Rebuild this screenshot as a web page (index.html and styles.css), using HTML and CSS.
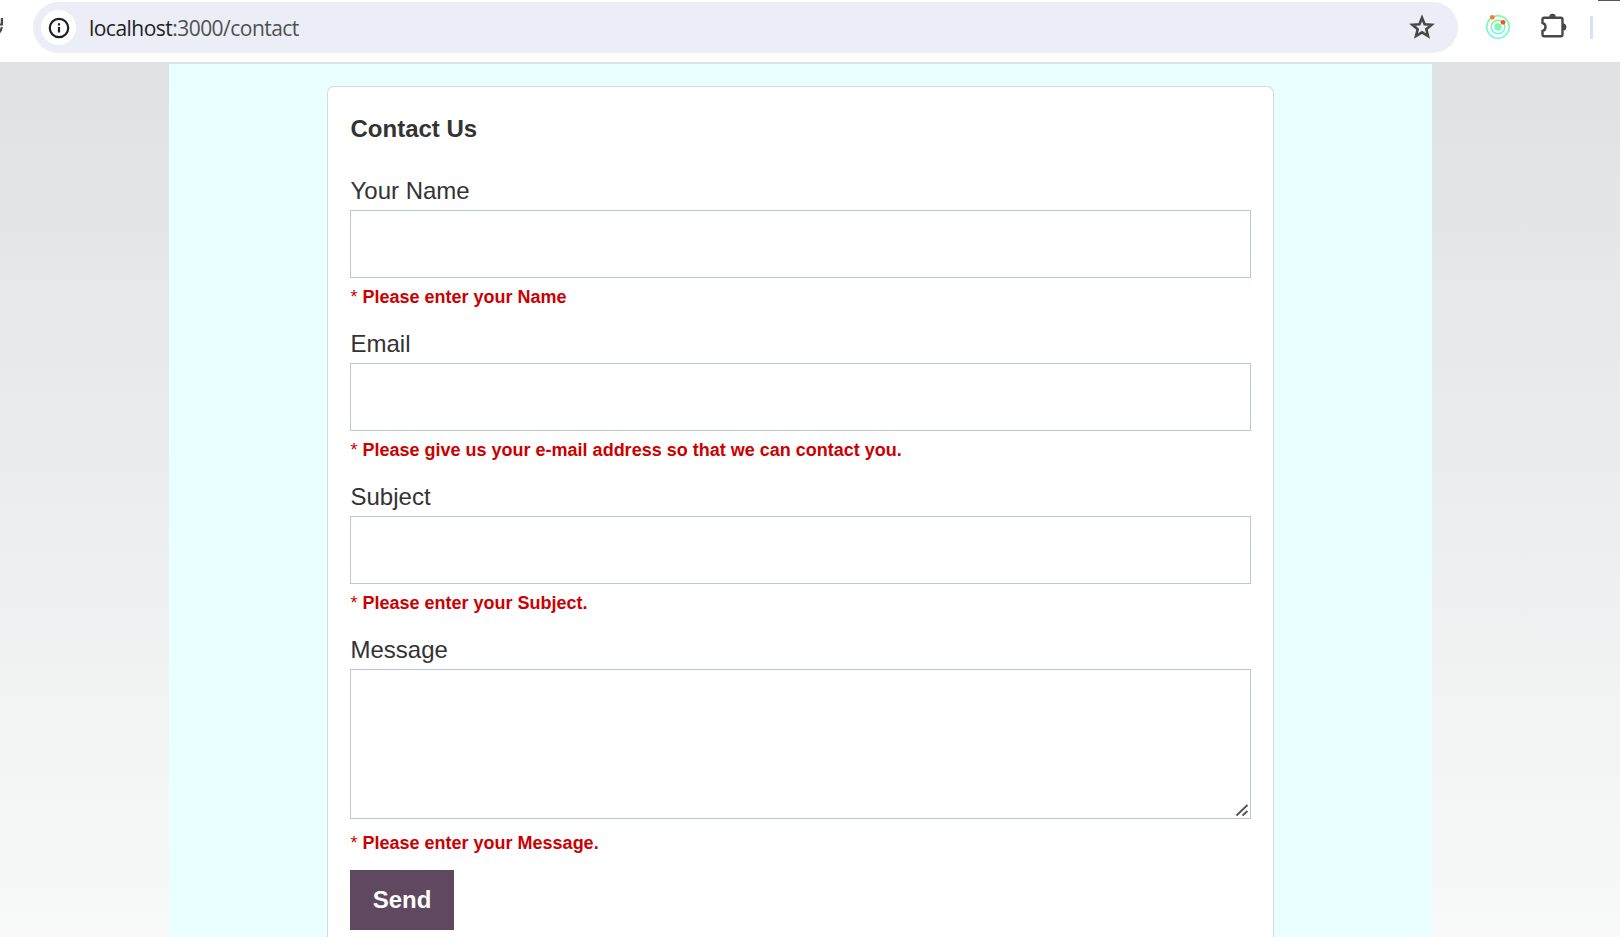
FILE: index.html
```
<!DOCTYPE html>
<html lang="en">
<head>
<meta charset="utf-8">
<title>Contact Us</title>
<link rel="stylesheet" href="styles.css">
</head>
<body>
<header class="toolbar">
  <svg class="reload" width="5" height="20" viewBox="0 0 5 20"><path d="M2.900 1V7.500H0" fill="none" stroke="#474747" stroke-width="2.200"/><path d="M2.800 10C2.300 13 1.500 14.500 0 15.500" fill="none" stroke="#474747" stroke-width="2.200"/></svg>
  <div class="address">
    <span class="info">
      <svg width="22" height="22" viewBox="0 0 22 22"><circle cx="11" cy="11" r="9.200" fill="none" stroke="#1f1f1f" stroke-width="2.200"/><path d="M11 10v5.500M11 6.200v2.200" stroke="#1f1f1f" stroke-width="2.200"/></svg>
    </span>
    <span class="url">localhost<span class="url-rest">:3000/contact</span></span>
    <svg class="star" width="26" height="26" viewBox="0 0 26 26"><path d="M13 3.800L15.600 10.200L22.600 10.700L17.300 15.200L19 22L13 18.300L7 22L8.700 15.200L3.400 10.700L10.400 10.200Z" fill="none" stroke="#474747" stroke-width="2.600"/></svg>
  </div>
  <svg class="orbit" width="26" height="26" viewBox="0 0 26 26">
    <defs><linearGradient id="ring" x1="0" y1="0" x2="0" y2="1"><stop offset="0" stop-color="#7dfb8c"/><stop offset="1" stop-color="#70fadf"/></linearGradient></defs>
    <circle cx="13" cy="13" r="11.200" fill="none" stroke="url(#ring)" stroke-width="1.500"/>
    <circle cx="13" cy="13" r="6.800" fill="none" stroke="url(#ring)" stroke-width="1.500"/>
    <circle cx="13" cy="13" r="3.700" fill="url(#ring)"/>
    <circle cx="7.300" cy="3.300" r="2.400" fill="#fb7a2b"/><circle cx="18" cy="8.300" r="2.400" fill="#f4522d"/>
  </svg>
  <svg class="puzzle" width="26" height="26" viewBox="0 0 26 26"><path d="M4 4.700H19.800Q21.500 4.700 21.500 6.400V21.500Q21.500 23.200 19.800 23.200H3.200Q1.500 23.200 1.500 21.500V17.900C5.500 17 5.500 10.900 1.500 10V6.400Q1.500 4.700 3.200 4.700Z" fill="none" stroke="#474747" stroke-width="2.400"/><path d="M8.300 4A3.200 3.300 0 0 1 14.700 4ZM22 10.400A3.400 3.500 0 0 1 22 17.400Z" fill="#474747"/></svg>
  <span class="divider"></span>
  <span class="window-edge"></span>
</header>
<main class="page">
  <div class="content">
    <form class="card" novalidate>
      <h1 class="title">Contact Us</h1>
      <div class="field">
        <label class="label" for="name">Your Name</label>
        <input class="control" id="name" type="text">
        <p class="error">* <b>Please enter your Name</b></p>
      </div>
      <div class="field">
        <label class="label" for="email">Email</label>
        <input class="control" id="email" type="email">
        <p class="error">* <b>Please give us your e-mail address so that we can contact you.</b></p>
      </div>
      <div class="field">
        <label class="label" for="subject">Subject</label>
        <input class="control" id="subject" type="text">
        <p class="error">* <b>Please enter your Subject.</b></p>
      </div>
      <div class="field field-message">
        <label class="label" for="message">Message</label>
        <div class="message-box">
          <textarea class="control control-message" id="message"></textarea>
          <svg class="grip" width="14" height="14" viewBox="0 0 14 14"><path d="M1.500 12.500L12.500 2M7.500 12.500L12.500 8" stroke="#555" stroke-width="1.900"/></svg>
        </div>
        <p class="error">* <b>Please enter your Message.</b></p>
      </div>
      <button class="send" type="button">Send</button>
    </form>
  </div>
</main>
</body>
</html>
```
FILE: styles.css
```
* {
  box-sizing: border-box;
}

body {
  margin: 0;
  height: 937px;
  overflow: hidden;
  display: flex;
  flex-direction: column;
  font-family: "Liberation Sans", Arial, sans-serif;
  color: #333;
  background: #fff;
}

.toolbar {
  position: relative;
  flex: none;
  display: flex;
  align-items: center;
  height: 62px;
  padding-bottom: 7px;
  background: #fff;
}

.reload {
  margin: 0 29px 2px -1px;
}

.address {
  display: flex;
  align-items: center;
  width: 1425px;
  height: 51px;
  padding: 0 23px 0 8px;
  border-radius: 26px;
  background: #ebeef7;
}

.info {
  display: flex;
  align-items: center;
  justify-content: center;
  width: 35px;
  height: 35px;
  border-radius: 50%;
  background: #fff;
}

.url {
  flex: 1;
  margin-left: 13px;
  font-family: "Open Sans", "Noto Sans", sans-serif;
  font-size: 21px;
  line-height: 30px;
  letter-spacing: -0.53px;
  color: #1f1f1f;
}

.url-rest {
  color: #505050;
}

.star {
  margin-bottom: 1px;
}

.orbit {
  margin: 0 0 1px 27px;
}

.puzzle {
  margin: 0 0 3px 30px;
}

.divider {
  width: 3px;
  height: 23px;
  margin-left: 23px;
  background: #d3e3fd;
}

.window-edge {
  position: absolute;
  top: 0;
  right: 0;
  width: 22px;
  height: 1px;
  background: #555;
}

.page {
  flex: 1;
  min-height: 0;
  padding: 2px 188px 0 169px;
  background: linear-gradient(#dee2e3, #f8faf9);
}

.content {
  height: 100%;
  padding: 22px 158px 0;
  background: #eaffff;
}

.card {
  height: 100%;
  padding: 28px 22px 0;
  border: 1px solid #d5d8dd;
  border-bottom: 0;
  border-radius: 7px 7px 0 0;
  background: #fff;
}

.title {
  margin: 0 0 34px;
  font-size: 24px;
  line-height: 28px;
}

.field {
  display: flex;
  flex-direction: column;
  margin-bottom: 23px;
}

.field-message {
  margin-bottom: 17px;
}

.label {
  margin-bottom: 5px;
  font-size: 24px;
  line-height: 28px;
}

.title,
.label,
.error {
  padding-left: 0.5px;
}

.control {
  display: block;
  width: 100%;
  height: 68px;
  margin: 0;
  padding: 10px;
  border: 1px solid #bcc6da;
  border-radius: 0;
  outline: none;
  background: #fff;
  font: inherit;
}

.message-box {
  position: relative;
  margin-bottom: 5px;
}

.control-message {
  height: 150px;
  resize: none;
}

.grip {
  position: absolute;
  right: 2px;
  bottom: 2px;
}

.error {
  margin: 9px 0 0;
  font-size: 18px;
  line-height: 20px;
  color: #c00;
}

.send {
  display: block;
  width: 104px;
  height: 60px;
  padding: 0;
  border: 0;
  background: #604860;
  color: #fff;
  font: bold 24px "Liberation Sans", Arial, sans-serif;
}
```
